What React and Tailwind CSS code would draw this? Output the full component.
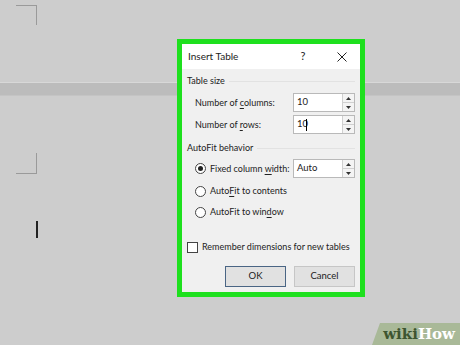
import React from 'react';

const font = { fontFamily: 'Lato, "Noto Sans", sans-serif' };

const Spinner = () => (
  <div className="flex flex-col w-[12px] h-full border-l border-[#d0d0d0] bg-[#f4f4f4]">
    <div className="flex-1 flex items-center justify-center border-b border-[#d0d0d0]">
      <svg width="5" height="3" viewBox="0 0 5 3"><path d="M0 3L2.5 0L5 3Z" fill="#333" /></svg>
    </div>
    <div className="flex-1 flex items-center justify-center">
      <svg width="5" height="3" viewBox="0 0 5 3"><path d="M0 0L2.5 3L5 0Z" fill="#333" /></svg>
    </div>
  </div>
);

const NumberInput = ({ value, caret }) => (
  <div className="flex items-stretch w-[62px] h-[19px] shrink-0 border border-[#b9b9b9] bg-white">
    <div className="flex-1 flex items-center pl-[3px] text-[9.5px] text-[#222]">
      {value}
      {caret && <span className="inline-block w-px h-[12px] bg-black -ml-[2px]" />}
    </div>
    <Spinner />
  </div>
);

const Radio = ({ checked }) => (
  <div className="w-[11px] h-[11px] shrink-0 rounded-full border border-[#444] bg-white flex items-center justify-center">
    {checked && <div className="w-[5px] h-[5px] rounded-full bg-[#222]" />}
  </div>
);

const U = ({ children }) => <span className="underline underline-offset-2">{children}</span>;

export default function App() {
  return (
    <div className="relative w-[460px] h-[345px] bg-[#cdcdcd] overflow-hidden" style={font}>
      {/* page band */}
      <div className="absolute left-0 right-0 top-[82px] h-[14px] bg-[#bcbcbc] border-t border-[#d8d8d8] border-b border-b-[#c4c4c4]" />

      {/* margin marks */}
      <div className="absolute left-[16px] top-[5px] w-[21px] h-[20px] border-t border-r border-[#9a9a9a]" />
      <div className="absolute left-[16px] top-[153px] w-[21px] h-[21px] border-b border-r border-[#9a9a9a]" />
      <div className="absolute left-[36px] top-[221px] w-[2px] h-[17px] bg-[#222]" />

      {/* dialog */}
      <div className="absolute left-[177px] top-[39px] w-[188px] h-[258px] border-[5px] border-[#1ee01e] bg-[#f0f0f0] text-[#222] text-[9px] whitespace-nowrap">
        <div className="h-[25px] bg-white flex items-center pl-[6px] text-[10px]">
          <span className="flex-1">Insert Table</span>
          <span className="w-[12px] text-center text-[11px] mr-[28px]">?</span>
          <svg width="10" height="10" viewBox="0 0 10 10" className="mr-[13px]">
            <path d="M0.5 0.5L9.5 9.5M9.5 0.5L0.5 9.5" stroke="#222" strokeWidth="1" />
          </svg>
        </div>

        <div className="px-[5px]">
          <div className="flex items-center h-[16px] mt-[4px]">
            <span>Table size</span>
            <div className="flex-1 ml-[4px] border-t border-[#e2e2e2]" />
          </div>
          <div className="flex items-center h-[19px] mt-[4px] pl-[8px]">
            <span className="flex-1">Number of <U>c</U>olumns:</span>
            <NumberInput value="10" />
          </div>
          <div className="flex items-center h-[19px] mt-[3px] pl-[8px]">
            <span className="flex-1">Number of <U>r</U>ows:</span>
            <NumberInput value="10" caret />
          </div>

          <div className="flex items-center h-[16px] mt-[6px]">
            <span>AutoFit behavior</span>
            <div className="flex-1 ml-[4px] border-t border-[#e2e2e2]" />
          </div>
          <div className="flex items-center h-[19px] mt-[3px] pl-[8px]">
            <Radio checked />
            <span className="flex-1 ml-[4px]">Fixed column <U>w</U>idth:</span>
            <NumberInput value="Auto" />
          </div>
          <div className="flex items-center h-[16px] mt-[5px] pl-[8px]">
            <Radio />
            <span className="ml-[4px]">Auto<U>F</U>it to contents</span>
          </div>
          <div className="flex items-center h-[16px] mt-[5px] pl-[8px]">
            <Radio />
            <span className="ml-[4px]">AutoFit to win<U>d</U>ow</span>
          </div>

          <div className="flex items-center h-[14px] mt-[20px]">
            <div className="w-[11px] h-[11px] shrink-0 border border-[#444] bg-white" />
            <span className="ml-[4px]">Remember dimensions for new tables</span>
          </div>

          <div className="flex justify-end gap-[8px] mt-[12px] pr-[0px]">
            <button className="w-[61px] h-[21px] border border-[#4a6584] bg-[#e1e1e1] text-[9.5px]">OK</button>
            <button className="w-[61px] h-[21px] border border-[#c6c6c6] bg-[#e1e1e1] text-[9.5px]">Cancel</button>
          </div>
        </div>
      </div>

      {/* wikiHow badge */}
      <div className="absolute right-0 bottom-0 w-[88px] h-[22px] bg-[#a9b998] [clip-path:polygon(8px_0,100%_0,100%_100%,0_100%)] flex items-center justify-end pr-[5px]">
        <span className="text-[15px] font-bold leading-none" style={{ fontFamily: '"DejaVu Serif", "Liberation Serif", serif' }}>
          <span className="text-[#3d5530]">wiki</span>
          <span className="text-white">How</span>
        </span>
      </div>
    </div>
  );
}
